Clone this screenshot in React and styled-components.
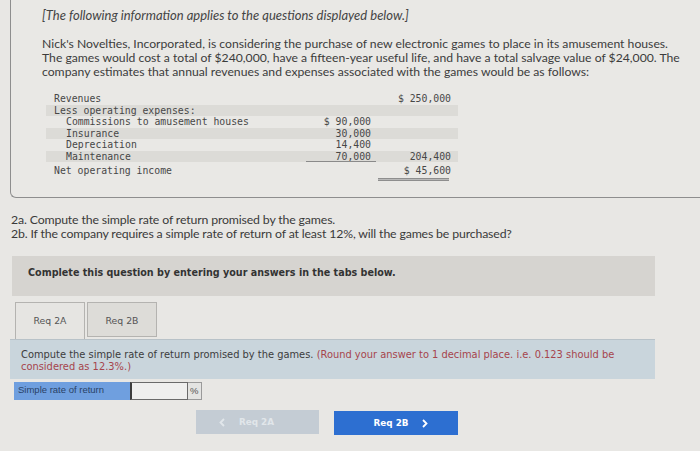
import React from 'react';
import styled, { createGlobalStyle } from 'styled-components';

const GlobalStyle = createGlobalStyle`
  html, body {
    margin: 0;
    padding: 0;
    background: #e8e7e4;
    overflow: hidden;
  }
  body {
    width: 700px;
    height: 451px;
  }
`;

const Page = styled.div`
  display: flex;
  flex-direction: column;
  color: #3a3a3a;
  font-family: Lato, "Open Sans", sans-serif;
`;

const InfoBox = styled.section`
  box-sizing: border-box;
  height: 198px;
  margin-left: 10px;
  padding: 8px 0 0 31px;
  border-left: 1px solid #8e8e8e;
  border-bottom: 1px solid #8e8e8e;
  border-bottom-left-radius: 6px;
  background: #e9e8e5;
`;

const Note = styled.div`
  font-style: italic;
  font-size: 13px;
  line-height: 14px;
  color: #444;
`;

const Intro = styled.p`
  margin: 15px 0 0;
  font-size: 12.2px;
  line-height: 14px;
  color: #3c3c3c;
`;

const Ledger = styled.div`
  display: grid;
  grid-template-columns: 260px 70px 82px;
  grid-auto-rows: 11.5px;
  width: 412px;
  margin: 14px 0 0 4px;
  font-family: "DejaVu Sans Mono", "Liberation Mono", monospace;
  font-size: 9.8px;
  line-height: 11.5px;
  color: #474747;
`;

const Row = styled.div`
  display: contents;
  & > * {
    background: ${p => (p.$shade ? '#dcdbd7' : 'transparent')};
  }
`;

const Label = styled.div`
  padding-left: ${p => (p.$indent ? 20 : 8)}px;
  white-space: pre;
`;

const Amount = styled.div`
  text-align: right;
  padding-right: ${p => p.$pad || 5}px;
  white-space: pre;
  ${p => p.$under && 'box-shadow: inset 0 -1px 0 #8a8a8a;'}
`;

const TotalRow = styled.div`
  display: contents;
  & > * {
    margin-top: 3px;
  }
`;

const DoubleRule = styled.div`
  grid-column: 3;
  margin: 4px 9px 0 2px;
  height: 3px;
  border-top: 1px solid #8e8e8e;
  border-bottom: 1px solid #8e8e8e;
  box-sizing: border-box;
  background: #b8b8b8;
`;

const Questions = styled.div`
  margin: 15px 0 0 11px;
  font-size: 12.3px;
  line-height: 14px;
  letter-spacing: -0.15px;
  color: #3a3a3a;
`;

const Banner = styled.div`
  box-sizing: border-box;
  width: 643px;
  height: 40px;
  margin: 15px 0 0 12px;
  padding: 10px 0 0 16px;
  background: #d6d4d0;
  font-family: "DejaVu Sans", Verdana, sans-serif;
  font-weight: bold;
  font-size: 9.6px;
  line-height: 14px;
  color: #333;
`;

const Tabs = styled.div`
  display: flex;
  gap: 2px;
  margin: 6px 0 0 15px;
`;

const Tab = styled.div`
  box-sizing: border-box;
  width: 70px;
  height: ${p => (p.$active ? 37 : 35)}px;
  padding-top: 12px;
  text-align: center;
  border: 1px solid #b4b3b0;
  border-bottom: ${p => (p.$active ? 'none' : '1px solid #b4b3b0')};
  background: ${p => (p.$active ? '#e6e5e2' : '#dddcd8')};
  font-family: "DejaVu Sans", Verdana, sans-serif;
  font-size: 9.3px;
  color: #555;
`;

const Instructions = styled.div`
  box-sizing: border-box;
  width: 645px;
  height: 40px;
  margin-left: 10px;
  padding: 9px 0 0 11px;
  background: #c9d5dc;
  border-top: 1px solid #b8c2c8;
  font-family: "DejaVu Sans", Verdana, sans-serif;
  font-size: 9.9px;
  line-height: 12px;
  color: #3c3c3c;
`;

const Hint = styled.span`
  color: #a6444c;
`;

const AnswerRow = styled.div`
  display: flex;
  height: 18px;
  margin: 3px 0 0 14px;
`;

const AnswerLabel = styled.div`
  box-sizing: border-box;
  width: 116px;
  padding: 2px 0 0 4px;
  background: #6f9fdf;
  font-family: "Liberation Sans", Arial, sans-serif;
  font-size: 9.5px;
  color: #2a4266;
`;

const AnswerInput = styled.div`
  box-sizing: border-box;
  width: 58px;
  border: 1px solid #6a6a6a;
  border-left: 2px solid #3d3d3d;
  background: #efefee;
`;

const Unit = styled.div`
  box-sizing: border-box;
  width: 14px;
  padding: 2px 0 0 2px;
  border: 1px solid #9a9a9a;
  border-left: none;
  background: #e4e4e2;
  font-family: "Liberation Sans", Arial, sans-serif;
  font-size: 9.5px;
  color: #555;
`;

const Nav = styled.div`
  display: flex;
  gap: 15px;
  margin: 10px 0 0 196px;
`;

const NavButton = styled.div`
  box-sizing: border-box;
  display: flex;
  align-items: center;
  justify-content: center;
  gap: 14px;
  width: ${p => (p.$primary ? 124 : 123)}px;
  height: 24px;
  margin-top: ${p => (p.$primary ? 1 : 0)}px;
  background: ${p => (p.$primary ? '#2d6fd1' : '#c4ccd4')};
  color: ${p => (p.$primary ? '#ffffff' : '#e1e6ea')};
  font-family: "DejaVu Sans", Verdana, sans-serif;
  font-weight: bold;
  font-size: 8.8px;
  padding-left: ${p => (p.$primary ? 10 : 0)}px;
  padding-right: ${p => (p.$primary ? 0 : 22)}px;
  svg {
    display: block;
  }
`;

const Chevron = ({ dir }) => (
  <svg width="6" height="9" viewBox="0 0 6 9">
    <path
      d={dir === 'left' ? 'M5 1 L1.5 4.5 L5 8' : 'M1 1 L4.5 4.5 L1 8'}
      fill="none"
      stroke="currentColor"
      strokeWidth="1.8"
    />
  </svg>
);

const ledger = [
  { label: 'Revenues', b: '', c: '$ 250,000' },
  { label: 'Less operating expenses:', b: '', c: '', shade: true },
  { label: 'Commissions to amusement houses', b: '$ 90,000', c: '', indent: true },
  { label: 'Insurance', b: '30,000', c: '', indent: true, shade: true },
  { label: 'Depreciation', b: '14,400', c: '', indent: true },
  { label: 'Maintenance', b: '70,000', c: '204,400', indent: true, shade: true, under: true },
];

const App = () => {
  return (
    <Page>
      <GlobalStyle />
      <InfoBox>
        <Note>[The following information applies to the questions displayed below.]</Note>
        <Intro>
          Nick's Novelties, Incorporated, is considering the purchase of new electronic games to place in its amusement houses.
          <br />
          The games would cost a total of $240,000, have a fifteen-year useful life, and have a total salvage value of $24,000. The
          <br />
          company estimates that annual revenues and expenses associated with the games would be as follows:
        </Intro>
        <Ledger>
          {ledger.map(r => (
            <Row key={r.label} $shade={r.shade}>
              <Label $indent={r.indent}>{r.label}</Label>
              <Amount $under={r.under}>{r.b}</Amount>
              <Amount $pad={7}>{r.c}</Amount>
            </Row>
          ))}
          <TotalRow>
            <Label>Net operating income</Label>
            <Amount />
            <Amount $pad={7}>$ 45,600</Amount>
          </TotalRow>
          <DoubleRule />
        </Ledger>
      </InfoBox>

      <Questions>
        2a. Compute the simple rate of return promised by the games.
        <br />
        2b. If the company requires a simple rate of return of at least 12%, will the games be purchased?
      </Questions>

      <Banner>Complete this question by entering your answers in the tabs below.</Banner>

      <Tabs>
        <Tab $active>Req 2A</Tab>
        <Tab>Req 2B</Tab>
      </Tabs>

      <Instructions>
        Compute the simple rate of return promised by the games.{' '}
        <Hint>
          (Round your answer to 1 decimal place. i.e. 0.123 should be
          <br />
          considered as 12.3%.)
        </Hint>
      </Instructions>

      <AnswerRow>
        <AnswerLabel>Simple rate of return</AnswerLabel>
        <AnswerInput />
        <Unit>%</Unit>
      </AnswerRow>

      <Nav>
        <NavButton>
          <Chevron dir="left" />
          Req 2A
        </NavButton>
        <NavButton $primary>
          Req 2B
          <Chevron dir="right" />
        </NavButton>
      </Nav>
    </Page>
  );
};

export default App;
